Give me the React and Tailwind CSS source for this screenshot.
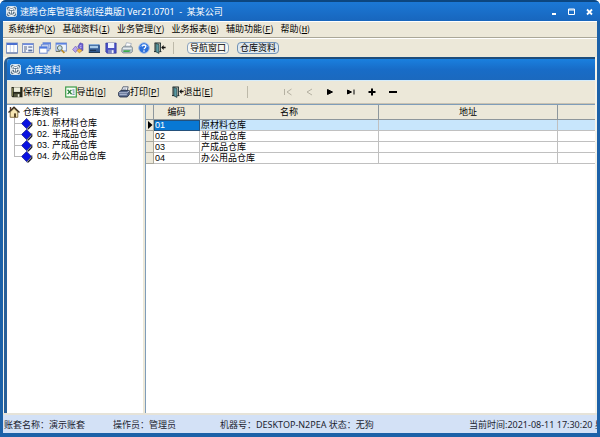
import { useState } from "react";

const menus = [
  ["系统维护", "X"],
  ["基础资料", "I"],
  ["业务管理", "Y"],
  ["业务报表", "B"],
  ["辅助功能", "F"],
  ["帮助", "H"],
];

const warehouses = [
  { code: "01", name: "原材料仓库", address: "" },
  { code: "02", name: "半成品仓库", address: "" },
  { code: "03", name: "产成品仓库", address: "" },
  { code: "04", name: "办公用品仓库", address: "" },
];

function Svg({ children, className = "size-3" }) {
  return (
    <svg viewBox="0 0 12 12" className={`block shrink-0 ${className}`} aria-hidden="true">
      {children}
    </svg>
  );
}

function AppLogo() {
  return (
    <Svg className="size-[11px]">
      <rect x="0.5" y="0.5" width="11" height="11" rx="2" fill="#5c7488" stroke="#eef4f8" />
      <circle cx="6" cy="6" r="4.2" fill="#5c7488" stroke="#f4f8fb" strokeWidth="1.3" />
      <path d="M2 5.8h3v2.4M10 5.8H7v2.4M4 3.8h4" stroke="#f4f8fb" strokeWidth="1.1" fill="none" />
    </Svg>
  );
}

function ListIcon() {
  return (
    <Svg>
      <rect x="0.5" y="1" width="11" height="10" fill="#fff" stroke="#8098c8" />
      <rect x="1" y="1" width="10" height="2" fill="#4a6fd0" />
      <path d="M4.3 3v8M7.8 3v8" stroke="#b9c9ea" strokeWidth="0.8" />
      <path d="M0.5 11h11" stroke="#5a6f9c" />
    </Svg>
  );
}

function FormIcon() {
  return (
    <Svg>
      <rect x="0.5" y="1.5" width="11" height="9" fill="#eef2fb" stroke="#8a99bd" />
      <rect x="1" y="1.5" width="10" height="1.5" fill="#6d8be0" />
      <path d="M2 5h3M2 7h3M2 9h2" stroke="#596784" strokeWidth="1" />
      <rect x="6.3" y="4.3" width="4" height="1.6" fill="#7d8eae" />
      <rect x="6.3" y="7.6" width="4" height="1.8" fill="#59729f" />
    </Svg>
  );
}

function WindowsIcon() {
  return (
    <Svg>
      <rect x="4" y="0.8" width="7.5" height="6" fill="#e7eefc" stroke="#6d8bd0" />
      <rect x="4" y="0.8" width="7.5" height="1.6" fill="#5c82e0" />
      <rect x="2.4" y="2.8" width="7.5" height="6" fill="#e7eefc" stroke="#6d8bd0" />
      <rect x="0.6" y="4.8" width="7.5" height="6.4" fill="#fff" stroke="#6d8bd0" />
      <rect x="0.6" y="4.8" width="7.5" height="1.8" fill="#4c78de" />
    </Svg>
  );
}

function SearchWindowIcon() {
  return (
    <Svg>
      <rect x="1" y="1" width="10.4" height="8" fill="#eff5ff" stroke="#7590c9" />
      <rect x="1" y="1" width="10.4" height="1.6" fill="#5c82e0" />
      <circle cx="4.8" cy="6" r="2.4" fill="#cbe5ef" stroke="#65705d" />
      <path d="M6.6 8l2.8 3" stroke="#b98a25" strokeWidth="1.8" />
      <path d="M1 9.5h4" stroke="#6d7566" />
    </Svg>
  );
}

function ShapesIcon() {
  return (
    <Svg>
      <path d="M5.8 4.5L8 0.8l3 1v6.6l-3 1z" fill="#6b5ed0" stroke="#4a45a0" strokeWidth="0.5" />
      <path d="M0.6 7.5L3.6 4l2.3 3.3-2.4 3.2z" fill="#b7a3ef" stroke="#6a57b2" strokeWidth="0.6" />
      <path d="M4.8 8.3l3-1.5 2.4 1.6-2.8 2.6z" fill="#f1bd45" stroke="#a77b24" strokeWidth="0.5" />
      <path d="M7.6 4.2l1.8-.8M7.8 6l1.8-.8" stroke="#ded8ff" strokeWidth="0.8" />
    </Svg>
  );
}

function DeviceIcon() {
  return (
    <Svg>
      <path d="M0.8 2h10L12 3.2v7.4H.8z" fill="#355e96" />
      <path d="M1 2h9.5l.8 1H1z" fill="#88add5" />
      <rect x="2" y="3.8" width="8" height="2.4" fill="#a9cbe8" />
      <path d="M2 8.4h6" stroke="#1d3553" strokeWidth="1.2" />
      <path d="M.8 10.4H12" stroke="#183149" />
    </Svg>
  );
}

function DiskIcon() {
  return (
    <Svg>
      <path d="M0.8 1h10.4v10.2H2L0.8 10z" fill="#4a50c4" stroke="#2a3294" strokeWidth="0.6" />
      <rect x="3" y="1" width="6.2" height="5" fill="#eff3ff" />
      <rect x="3" y="7.8" width="6" height="3.4" fill="#7c86c4" />
      <rect x="6.8" y="8.2" width="1.6" height="3" fill="#f2f4ff" />
    </Svg>
  );
}

function GreenPrinterIcon() {
  return (
    <Svg>
      <path d="M4 5l1.5-4.3 4.8.8L9 5.4z" fill="#fff" stroke="#8494aa" strokeWidth="0.6" />
      <path d="M1 6l2-1.8h7.5L11.6 6v3.5L10 11H2L.7 9.6z" fill="#b4bfc8" stroke="#64747b" strokeWidth="0.6" />
      <path d="M2.5 8.2h7L8.3 10H2.3z" fill="#3fae4f" />
      <path d="M2 6.4h8.5" stroke="#eef4f5" />
    </Svg>
  );
}

function HelpIcon() {
  return (
    <Svg>
      <circle cx="6" cy="6" r="5.3" fill="#2c70dc" stroke="#a2bce5" />
      <path d="M2.4 4.6a4 4 0 0 1 7.2 0" fill="none" stroke="#7eb0f5" />
      <path d="M4.3 4.6c0-2 3.5-2 3.5 0C7.8 6 6 5.9 6 7.3" fill="none" stroke="#fff" strokeWidth="1.3" />
      <circle cx="6" cy="9.1" r="0.8" fill="#fff" />
    </Svg>
  );
}

function ExitIcon() {
  return (
    <Svg>
      <path d="M.6 1h6.2" stroke="#1d2b2d" />
      <path d="M1 1v8.6M6.4 1v8.6M0 9.6h2M5.4 9.6h2" stroke="#1d2b2d" />
      <path d="M1.8 1.4L5 2.4v9L1.8 9.8z" fill="#5a9aa4" stroke="#152b2e" strokeWidth="0.7" />
      <path d="M7.2 5.5L9.6 3v1.7h2v1.6h-2V8z" fill="#111" />
    </Svg>
  );
}

function SaveIcon() {
  return (
    <Svg>
      <path d="M0.5 1h11v10.3H1.5L.5 10.2z" fill="#25271a" />
      <rect x="2.8" y="1.3" width="6.4" height="4.6" fill="#eeeedc" />
      <path d="M1.5 2v8" stroke="#77794c" />
      <rect x="3" y="7.6" width="6" height="3.2" fill="#55573f" />
      <rect x="6.8" y="8.2" width="1.5" height="2.6" fill="#f4f4e8" />
    </Svg>
  );
}

function ExcelIcon() {
  return (
    <Svg>
      <rect x="0.7" y="1" width="10.6" height="10" fill="#f7fff5" stroke="#3c9a48" strokeWidth="1.2" />
      <path d="M2.6 3.8l4 4.4M6.4 3.8L2.6 8.2" stroke="#268139" strokeWidth="1.3" />
      <path d="M7.3 4h2.2M7.8 6h1.8M7.3 8.2h2.4" stroke="#4d6f9a" strokeWidth="1" />
    </Svg>
  );
}

function PrinterIcon() {
  return (
    <Svg>
      <path d="M3.5 4.7L5 .8h5.2L9 5z" fill="#fff" stroke="#3b4860" strokeWidth="0.8" />
      <path d="M5.4 2.2h3M5 3.5h3" stroke="#7c89a5" strokeWidth="0.6" />
      <path d="M.6 6.4L3 4.4h8.3v4.2L9.2 11H1.8L.6 9.6z" fill="#55658a" stroke="#1e2942" strokeWidth="0.8" />
      <path d="M1 6.8h7.8l2.4-2M1.4 8.7h7.4" stroke="#c5d0e6" strokeWidth="0.9" fill="none" />
    </Svg>
  );
}

function HomeIcon() {
  return (
    <Svg>
      <path d="M2.2 6v5.3h7.6V6L6 2.4z" fill="#f7e7b4" stroke="#6b5426" strokeWidth="0.8" />
      <path d="M.5 6.5L6 1.2l5.5 5.3" fill="none" stroke="#3a2e1c" strokeWidth="1.4" />
      <path d="M2.5 1v3" stroke="#5c3a2b" strokeWidth="1.4" />
      <rect x="6" y="7.4" width="2" height="3.9" fill="#5b4828" />
    </Svg>
  );
}

function NodeIcon() {
  return (
    <Svg>
      <path d="M5.6 .4l4.8 5-4.8 5.3L.5 5.5z" fill="#0a12e0" stroke="#10146b" strokeWidth="0.6" />
      <path d="M5.6 11.4l5.6-5.6v2l-3.6 3.8z" fill="#14152a" />
      <path d="M10.8 4.4v3" stroke="#333" />
    </Svg>
  );
}

const toolbar = [
  ["列表", ListIcon],
  ["表单", FormIcon],
  ["窗口", WindowsIcon],
  ["查询", SearchWindowIcon],
  ["分类", ShapesIcon],
  ["设备", DeviceIcon],
  ["保存", DiskIcon],
  ["打印", GreenPrinterIcon],
  ["帮助", HelpIcon],
  ["退出", ExitIcon],
];

const actions = [
  ["保存", "S", SaveIcon],
  ["导出", "O", ExcelIcon],
  ["打印", "P", PrinterIcon],
  ["退出", "E", ExitIcon],
];

const navigator = [
  ["首条", "M2.5 3v6M9.5 3L5 6l4.5 3", true],
  ["上一条", "M9 3L4 6l5 3", true],
  ["下一条", "M3.5 3.5v5l5-2.5z", false],
  ["末条", "M2.5 4v4l4-2zM9 3.5v5", false],
  ["新增", "M6 2.5v7M2.5 6h7", false],
  ["删除", "M2 6h8", false],
];

function NavButton({ label, d, disabled }) {
  const simple = label === "新增" || label === "删除";
  return (
    <button type="button" aria-label={label} disabled={disabled} className={disabled ? "text-[#b5b1a2]" : "text-black"}>
      <Svg>
        <path
          d={d}
          fill={disabled || simple ? "none" : "currentColor"}
          stroke="currentColor"
          strokeWidth={simple ? 2 : 1}
        />
      </Svg>
    </button>
  );
}

function WindowControls() {
  return (
    <div className="flex gap-[6px] text-white">
      <button type="button" aria-label="最小化">
        <Svg>
          <path d="M4 8h4" stroke="currentColor" strokeWidth="2" />
        </Svg>
      </button>
      <button type="button" aria-label="最大化">
        <Svg>
          <path d="M2.5 3h6v5.5h-6zM2.5 4h6" fill="none" stroke="currentColor" />
        </Svg>
      </button>
      <button type="button" aria-label="关闭">
        <Svg>
          <path d="M3 3.5L8 8.5M8 3.5L3 8.5" stroke="currentColor" strokeWidth="1.8" />
        </Svg>
      </button>
    </div>
  );
}

function Tree({ selected, onSelect }) {
  return (
    <nav aria-label="仓库资料" className="w-[136px] shrink-0 bg-white">
      <div className="flex h-3 items-center gap-[3px] pt-[2px] pl-[1px]">
        <HomeIcon />
        <span>仓库资料</span>
      </div>
      <ul className="pt-px pl-[7px]">
        {warehouses.map((w, i) => (
          <li key={w.code} className="flex h-[11px] items-center">
            <span className={i === warehouses.length - 1 ? "h-full w-[7px]" : "h-full w-[7px] border-l border-[#b8b8b8]"}>
              <span className={i === warehouses.length - 1 ? "block h-[6px] border-b border-l border-[#b8b8b8]" : "block h-[6px] border-b border-[#b8b8b8]"} />
            </span>
            <button type="button" onClick={() => onSelect(w.code)} aria-pressed={selected === w.code} className="flex items-center gap-1">
              <NodeIcon />
              <span>{`${w.code}. ${w.name}`}</span>
            </button>
          </li>
        ))}
      </ul>
    </nav>
  );
}

function Grid({ selected, onSelect }) {
  const head = "h-[15px] border-r border-b border-[#8e979c] bg-[#ece8d9] p-0 font-normal";
  const cell = "h-[11px] border-r border-b border-[#c0c0c0] p-0";

  return (
    <div className="min-w-0 flex-1 overflow-hidden border-l border-[#7f9db9] bg-white">
      <table className="w-full table-fixed border-separate border-spacing-0 leading-[10px]">
        <colgroup>
          <col className="w-2" />
          <col className="w-[46px]" />
          <col className="w-[179px]" />
          <col className="w-[179px]" />
          <col />
        </colgroup>
        <thead>
          <tr>
            <th className={head} />
            <th className={head}>编码</th>
            <th className={head}>名称</th>
            <th className={head}>地址</th>
            <th className="h-[15px] border-b border-[#8e979c] bg-[#ece8d9] p-0" />
          </tr>
        </thead>
        <tbody>
          {warehouses.map((w) => {
            const active = w.code === selected;
            return (
              <tr key={w.code} onClick={() => onSelect(w.code)} className={active ? "bg-[#c8e6fc]" : "bg-white"}>
                <td className="h-[11px] border-r border-b border-[#aaa89c] bg-[#ece8d9] p-0">
                  {active && (
                    <svg viewBox="0 0 7 10" className="block h-[10px] w-[7px]" aria-hidden="true">
                      <path d="M2 1v8l4.5-4z" fill="#000" />
                    </svg>
                  )}
                </td>
                <td className={active ? `${cell} bg-[#0878d4] text-white outline -outline-offset-1 outline-[#24517c]` : cell}>
                  <span className="pl-[1px]">{w.code}</span>
                </td>
                <td className={cell}>
                  <span className="pl-[1px]">{w.name}</span>
                </td>
                <td className={cell}>{w.address}</td>
                <td className="h-[11px] border-b border-[#c0c0c0] p-0" />
              </tr>
            );
          })}
        </tbody>
      </table>
    </div>
  );
}

export default function App() {
  const [selected, setSelected] = useState("01");

  return (
    <div className="flex h-screen flex-col overflow-hidden rounded-t-md bg-[#1c61a8] px-[3px] pb-1 font-['Noto_Sans_CJK_SC',sans-serif] text-[9px] leading-[11px] text-black">
      <header className="-mx-[3px] flex h-[21px] shrink-0 items-center gap-[3px] border-t-2 border-[#0c4680] bg-linear-to-b from-[#1b78d6] to-[#1866bd] pr-1 pl-[6px] text-white">
        <AppLogo />
        <h1 className="flex-1 whitespace-pre font-['Noto_Sans','Noto_Sans_CJK_SC',sans-serif]">
          速腾仓库管理系统[经典版] Ver21.0701  -  某某公司
        </h1>
        <WindowControls />
      </header>

      <nav className="flex h-[17px] shrink-0 items-center gap-[7px] border-t border-b border-t-white border-b-[#aaa798] bg-[#ece8d9] pl-[5px]">
        {menus.map(([name, key]) => (
          <button type="button" key={name}>
            {name}(<u className="font-['Liberation_Mono',monospace]">{key}</u>)
          </button>
        ))}
      </nav>

      <div className="flex h-[19px] shrink-0 items-center border-t border-white bg-[#ece8d9] pl-[3px]">
        <div className="flex w-40 justify-between">
          {toolbar.map(([label, Icon]) => (
            <button type="button" key={label} aria-label={label} title={label}>
              <Icon />
            </button>
          ))}
        </div>
        <span className="ml-[7px] h-3 w-px bg-[#bdb9a9]" />
        <div className="ml-[13px] flex gap-2">
          <button type="button" className="h-3 rounded-[4px] border border-[#8ba3bd] bg-[#f6f6f2] px-[2px] leading-[10px]">导航窗口</button>
          <button type="button" className="h-3 rounded-[4px] border border-[#6f91b4] bg-[#dfe8ee] px-[2px] leading-[10px]">仓库资料</button>
        </div>
      </div>

      <main className="flex min-h-0 flex-1 flex-col bg-[#f5f3ea] pr-[2px] pl-[1px]">
        <section className="flex min-h-0 flex-1 flex-col overflow-hidden rounded-tl-md border-t-2 border-l-[3px] border-t-[#1d4d7c] border-l-[#285f99] bg-[#ece8d9]">
          <header className="flex h-[21px] shrink-0 items-center gap-1 bg-linear-to-b from-[#1a80df] via-[#186cc7] to-[#1b69be] pl-[3px] text-white">
            <AppLogo />
            <h2>仓库资料</h2>
          </header>

          <div className="flex h-6 shrink-0 items-center border-t border-b border-t-[#d5ecfb] border-b-[#c9c2b2] pl-1">
            <div className="flex gap-3">
              {actions.map(([name, key, Icon]) => (
                <button type="button" key={name} className="flex items-center">
                  <Icon />
                  <span>
                    {name}[<u className="font-['Liberation_Mono',monospace]">{key}</u>]
                  </span>
                </button>
              ))}
            </div>
            <span className="ml-[34px] h-3 w-px bg-[#bdb9a9]" />
            <div className="ml-[34px] flex gap-[9px]">
              {navigator.map(([label, d, disabled]) => (
                <NavButton key={label} label={label} d={d} disabled={disabled} />
              ))}
            </div>
          </div>

          <div className="flex min-h-0 flex-1 gap-[2px] border-t border-[#7f9db9] font-['Liberation_Sans','Noto_Sans_CJK_SC',sans-serif]">
            <Tree selected={selected} onSelect={setSelected} />
            <Grid selected={selected} onSelect={setSelected} />
          </div>
        </section>
      </main>

      <footer className="flex h-5 shrink-0 items-center overflow-hidden border-t-2 border-[#e6e3d8] bg-[#d3e1f6] pl-[1px] font-['Noto_Sans','Noto_Sans_CJK_SC',sans-serif] whitespace-nowrap text-[#1c2430]">
        <span className="w-[109px]">账套名称：演示账套</span>
        <span className="w-[107px]">操作员：管理员</span>
        <span className="flex-1">机器号：DESKTOP-N2PEA 状态：无狗</span>
        <span className="w-[128px] overflow-hidden">当前时间:2021-08-11 17:30:20 星期三</span>
      </footer>
    </div>
  );
}
